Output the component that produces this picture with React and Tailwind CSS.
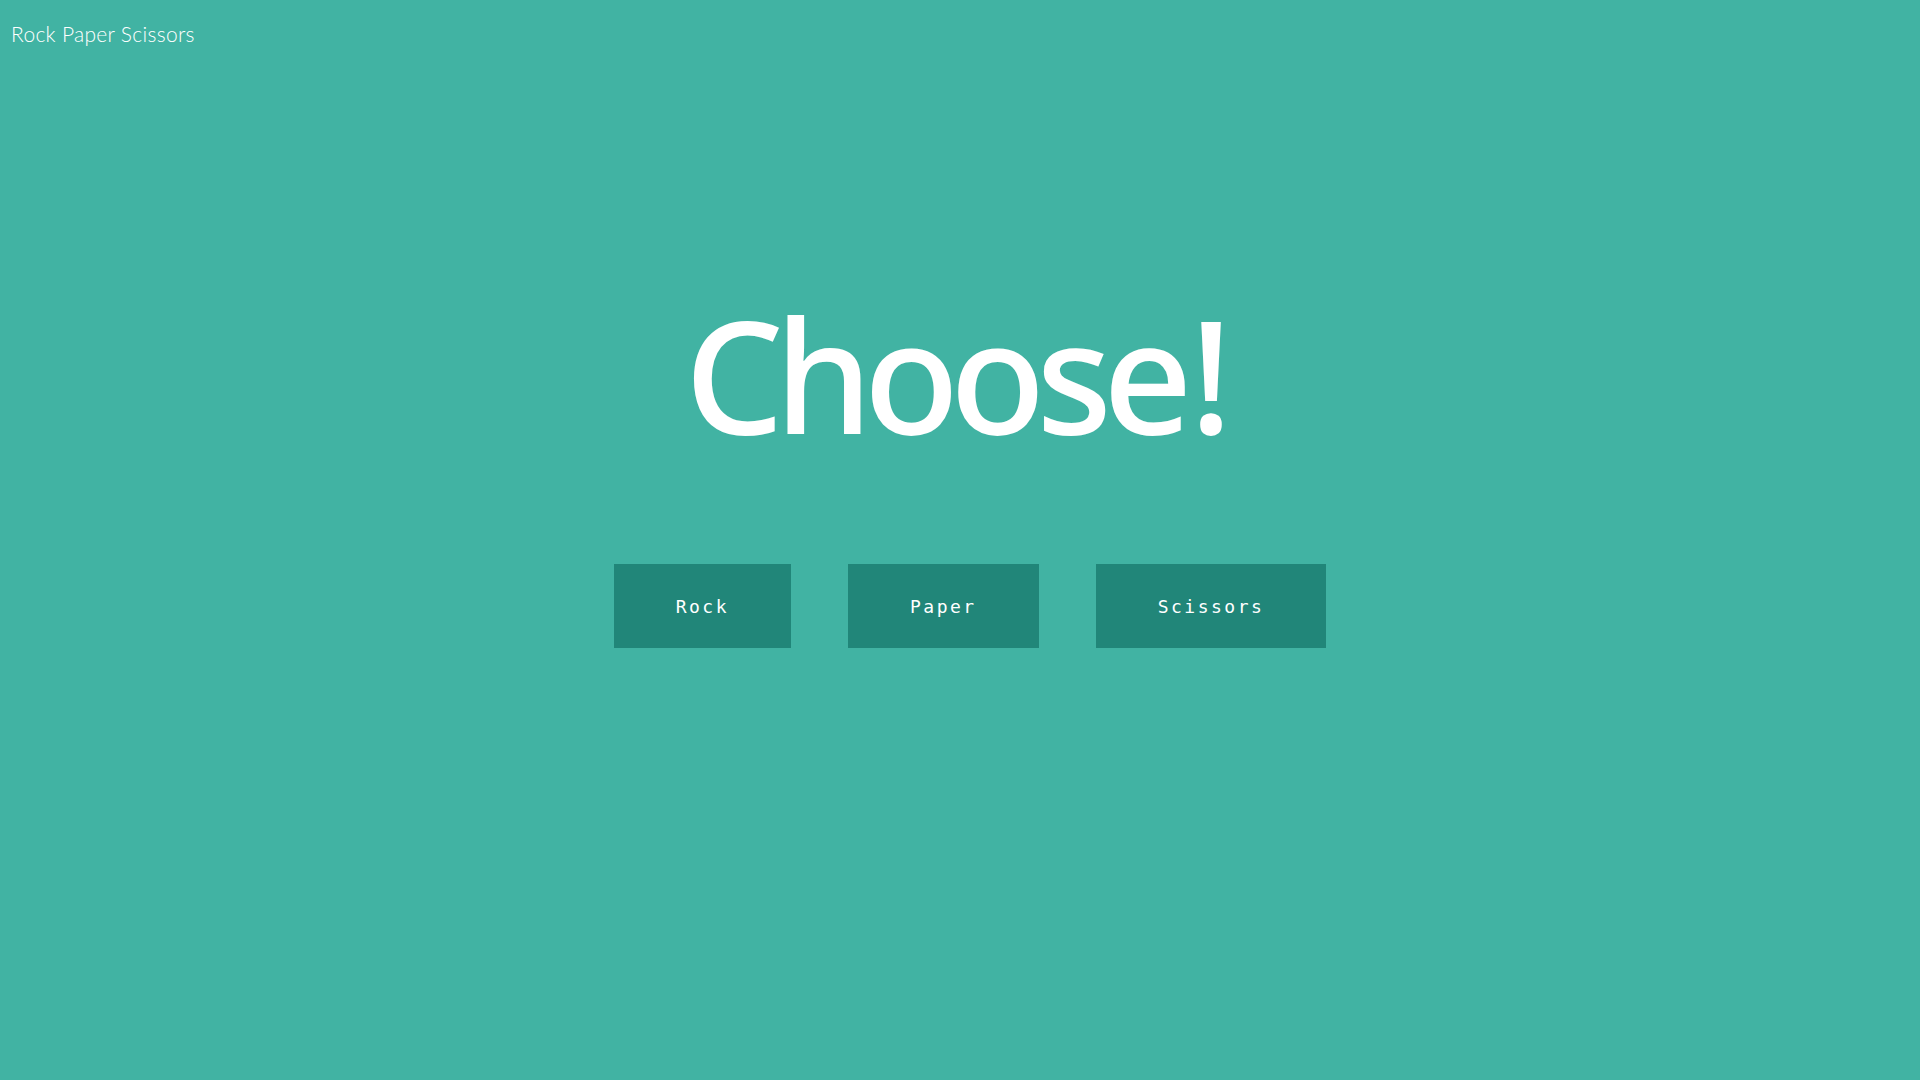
import React from 'react';

const choices = ['Rock', 'Paper', 'Scissors'];

const App = () => {
  return (
    <div className="min-h-screen w-full bg-[#41b3a3] text-white">
      {/* header */}
      <div className="pl-[11px] pt-[18px]">
        <h1 className="text-[21px] font-light leading-[32px] tracking-[0.3px] [font-family:Lato,'Liberation_Sans',sans-serif]">
          Rock Paper Scissors
        </h1>
      </div>

      {/* game */}
      <div className="flex flex-col items-center">
        <h2 className="mt-[246px] pr-[12px] text-[156px] font-medium leading-none tracking-[-9px] [font-family:'Noto_Sans','Open_Sans',sans-serif]">
          Choose<span className="ml-[6px]">!</span>
        </h2>
        <div className="mt-[112px] flex gap-[57px] pl-[20px]">
          {choices.map((c) => (
            <button
              key={c}
              className="h-[84px] bg-[#218679] px-[62px] text-[18px] tracking-[2.5px] text-white [font-family:'DejaVu_Sans_Mono',monospace]"
            >
              {c}
            </button>
          ))}
        </div>
      </div>
    </div>
  );
};

export default App;
